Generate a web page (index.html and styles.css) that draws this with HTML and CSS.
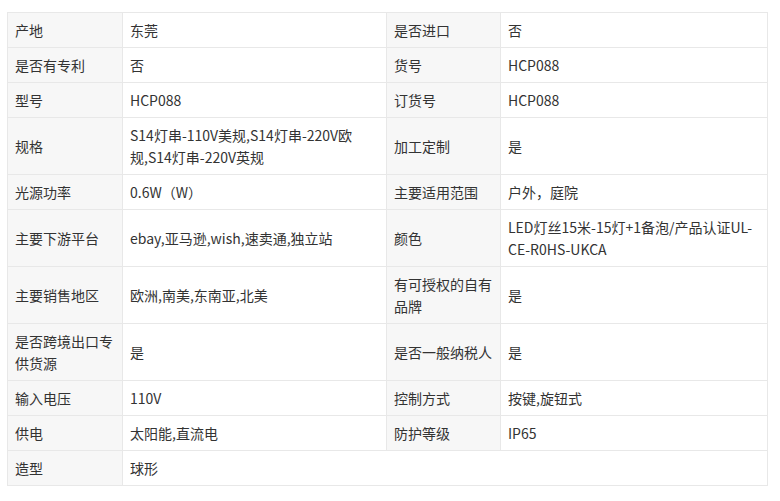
FILE: index.html
```html
<!DOCTYPE html>
<html lang="zh-CN">
<head>
<meta charset="utf-8">
<title>产品属性</title>
<link rel="stylesheet" href="styles.css">
</head>
<body>
<table class="attrs">
  <colgroup>
    <col class="c-label1">
    <col class="c-value1">
    <col class="c-label2">
    <col class="c-value2">
  </colgroup>
  <tbody>
    <tr><th>产地</th><td>东莞</td><th>是否进口</th><td>否</td></tr>
    <tr><th>是否有专利</th><td>否</td><th>货号</th><td>HCP088</td></tr>
    <tr><th>型号</th><td>HCP088</td><th>订货号</th><td>HCP088</td></tr>
    <tr><th>规格</th><td>S14灯串-110V美规,S14灯串-220V欧<br>规,S14灯串-220V英规</td><th>加工定制</th><td>是</td></tr>
    <tr><th>光源功率</th><td>0.6W（W）</td><th>主要适用范围</th><td>户外，庭院</td></tr>
    <tr><th>主要下游平台</th><td>ebay,亚马逊,wish,速卖通,独立站</td><th>颜色</th><td>LED灯丝15米-15灯+1备泡/产品认证UL-CE-R0HS-UKCA</td></tr>
    <tr><th>主要销售地区</th><td>欧洲,南美,东南亚,北美</td><th>有可授权的自有品牌</th><td>是</td></tr>
    <tr><th>是否跨境出口专供货源</th><td>是</td><th>是否一般纳税人</th><td>是</td></tr>
    <tr><th>输入电压</th><td>110V</td><th>控制方式</th><td>按键,旋钮式</td></tr>
    <tr><th>供电</th><td>太阳能,直流电</td><th>防护等级</th><td>IP65</td></tr>
    <tr><th>造型</th><td colspan="3">球形</td></tr>
  </tbody>
</table>
</body>
</html>
```

FILE: styles.css
```css
html, body {
  margin: 0;
  padding: 0;
  background: #ffffff;
}

body {
  padding: 12px 0 0 7px;
  font-family: "Noto Sans CJK SC", "Noto Sans", sans-serif;
  font-size: 14px;
  line-height: 22px;
  color: #333333;
}

.attrs {
  width: 760px;
  table-layout: fixed;
  border-collapse: collapse;
  border: 1px solid #e8e8e8;
}

.c-label1 { width: 115px; }
.c-value1 { width: 264px; }
.c-label2 { width: 114px; }
.c-value2 { width: 267px; }

.attrs th,
.attrs td {
  border: 1px solid #e8e8e8;
  padding: 6px 7px 6px 7px;
  text-align: left;
  vertical-align: middle;
  font-weight: normal;
  word-break: break-all;
}

.attrs th {
  background: #f7f7f7;
  color: #333333;
}

.attrs td {
  background: #ffffff;
}
```
